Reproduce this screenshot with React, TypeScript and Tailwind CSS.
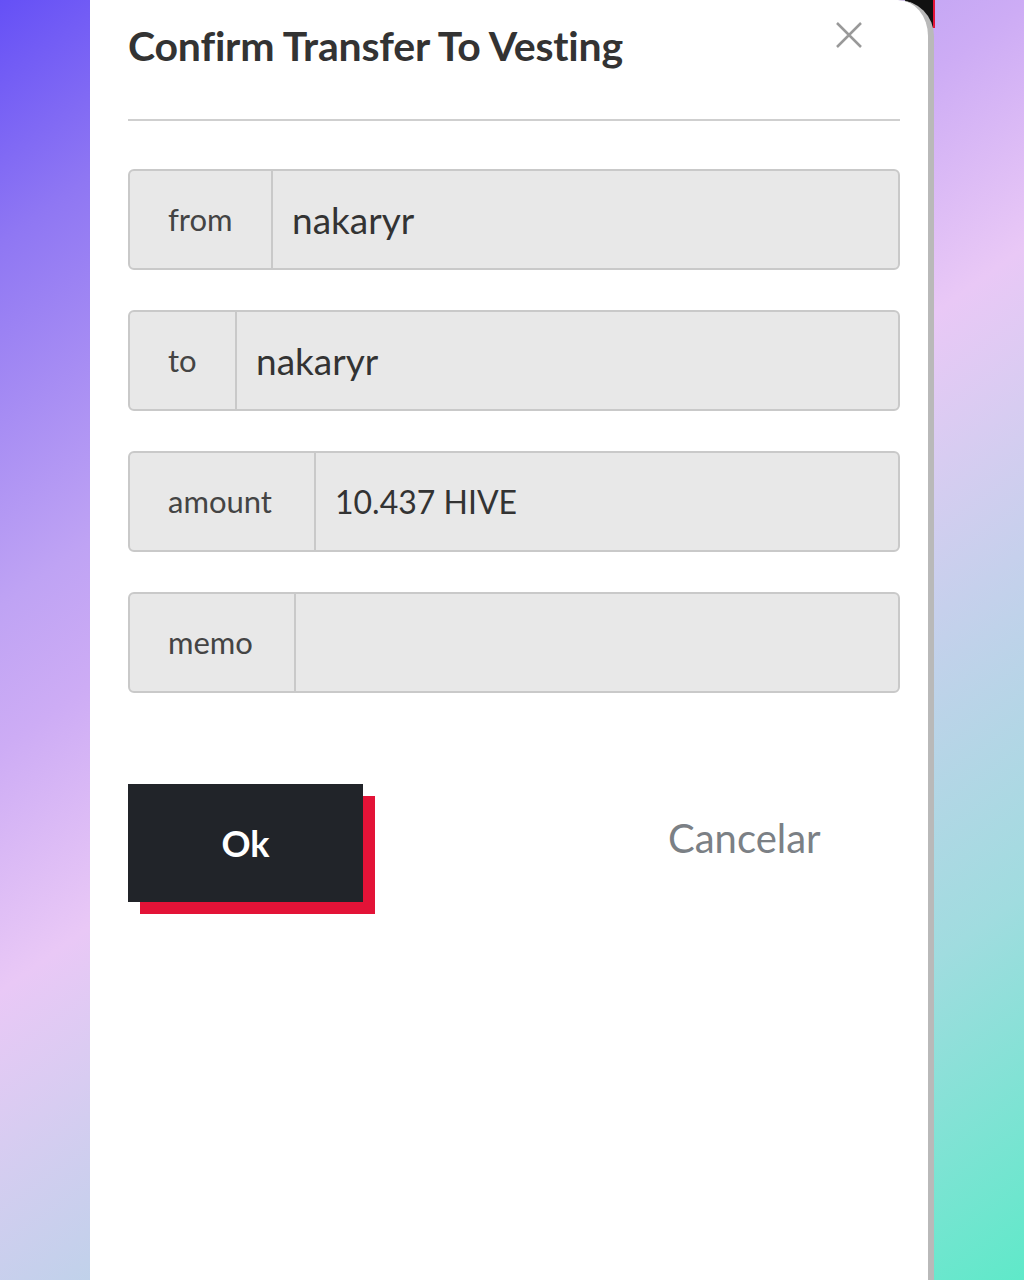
import React from 'react';

const fields = [
    { label: 'from', value: 'nakaryr', labelW: 'w-[143px]', size: 'text-[37px]' },
    { label: 'to', value: 'nakaryr', labelW: 'w-[107px]', size: 'text-[37px]' },
    { label: 'amount', value: '10.437 HIVE', labelW: 'w-[186px]', size: 'text-[32px]' },
    { label: 'memo', value: '', labelW: 'w-[166px]', size: 'text-[32px]' },
];

export default function App() {
    return (
        <div
            className="relative w-[1024px] h-[1280px] overflow-hidden bg-[linear-gradient(144deg,#6550f6_0%,#8f77f3_12%,#bfa3f4_30%,#cdacf5_37%,#e9c8f6_49%,#c6d0ec_64%,#a0dcdf_81%,#5fe9c9_100%)]"
            style={{ fontFamily: 'Lato, "Open Sans", sans-serif' }}
        >
            {/* dark corner peeking behind the dialog */}
            <div className="absolute left-[905px] top-0 w-[30px] h-[28px] bg-[#111] border-r-2 border-[#e31337]" />

            <div className="relative ml-[90px] w-[844px] h-full bg-white rounded-tr-[36px] border-r-[6px] border-[#b9b9b9] pl-[38px] pr-[28px]">
                <div className="relative h-[119px] pt-[22px]">
                    <h1 className="text-[41px] leading-[48px] font-bold text-[#333] tracking-[-0.2px]">Confirm Transfer To Vesting</h1>
                    <button className="absolute right-[36px] top-[20px] w-[30px] h-[30px] text-[#999]">
                        <svg viewBox="0 0 30 30" className="w-[30px] h-[30px]" fill="none" stroke="currentColor" strokeWidth="2.5">
                            <path d="M3 3 L27 27 M27 3 L3 27" />
                        </svg>
                    </button>
                </div>
                <div className="h-[2px] bg-[#cfcfcf]" />

                <div className="mt-[48px] flex flex-col gap-[40px]">
                    {fields.map((f) => (
                        <div key={f.label} className="flex h-[101px] rounded-[6px] border-2 border-[#c9c9c9] bg-[#e8e8e8] overflow-hidden">
                            <div className={`${f.labelW} shrink-0 flex items-center pl-[38px] border-r-2 border-[#c9c9c9] text-[31px] text-[#444]`}>
                                {f.label}
                            </div>
                            <div className={`flex items-center pl-[19px] ${f.size} text-[#333]`}>{f.value}</div>
                        </div>
                    ))}
                </div>

                <div className="mt-[91px] flex items-start">
                    <div className="relative w-[247px] h-[130px]">
                        <div className="absolute left-[12px] top-[12px] w-[235px] h-[118px] bg-[#e31337]" />
                        <button className="absolute left-0 top-0 w-[235px] h-[118px] bg-[#212429] text-white text-[36px] font-bold">
                            Ok
                        </button>
                    </div>
                    <button className="ml-[293px] mt-[28px] text-[40px] leading-[52px] text-[#7b8085]">Cancelar</button>
                </div>
            </div>
        </div>
    );
}
